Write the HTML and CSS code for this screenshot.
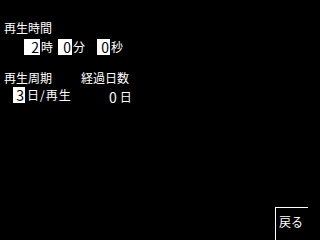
FILE: index.html
```html
<!DOCTYPE html>
<html lang="ja">
<head>
<meta charset="utf-8">
<link rel="stylesheet" href="styles.css">
</head>
<body>
<div class="screen">
  <section class="playtime">
    <div class="label">再生時間</div>
    <div class="time-row">
      <span class="field f-hour">2</span><span class="unit">時</span>
      <span class="field f-min">0</span><span class="unit">分</span>
      <span class="field f-sec">0</span><span class="unit">秒</span>
    </div>
  </section>
  <section class="cycle">
    <div class="col col-left">
      <div class="label">再生周期</div>
      <div class="cycle-row">
        <span class="field f-cycle">3</span><span class="unit unit-cycle">日/再生</span>
      </div>
    </div>
    <div class="col col-right">
      <div class="label">経過日数</div>
      <div class="elapsed-row">
        <span class="num">0</span><span class="unit">日</span>
      </div>
    </div>
  </section>
  <footer class="footer">
    <div class="back">戻る</div>
  </footer>
</div>
</body>
</html>
```
FILE: styles.css
```css
* { box-sizing: border-box; }
html, body {
  margin: 0;
  padding: 0;
  background: #000;
}
body {
  width: 320px;
  height: 240px;
  overflow: hidden;
  color: #fff;
  font-family: "Noto Sans CJK JP", "Noto Sans", sans-serif;
  font-size: 12px;
  line-height: 16px;
}
.screen {
  width: 320px;
  height: 240px;
  display: flex;
  flex-direction: column;
}
.label {
  height: 16px;
  white-space: nowrap;
}
.playtime {
  padding: 20px 0 0 4px;
}
.time-row {
  display: flex;
  margin-top: 3px;
  padding-left: 20px;
  height: 16px;
}
.field {
  display: block;
  height: 16px;
  background: #fff;
  color: #000;
  text-align: right;
  padding-right: 1px;
  font-size: 14px;
}
.num {
  display: block;
  font-size: 14px;
}
.unit {
  display: block;
  white-space: nowrap;
}
.f-hour { width: 16px; }
.f-min { width: 14px; margin-left: 5px; }
.f-sec { width: 13px; margin-left: 12px; }
.time-row .unit { margin-left: 1px; }

.cycle {
  display: flex;
  padding: 15px 0 0 4px;
}
.col-left { width: 77px; }
.col-right { width: 60px; }
.cycle-row {
  display: flex;
  margin-top: 1px;
  padding-left: 9px;
  height: 16px;
}
.f-cycle { width: 12px; }
.unit-cycle { margin-left: 2px; letter-spacing: 1px; }
.elapsed-row {
  display: flex;
  margin-top: 3px;
  padding-left: 28px;
}
.elapsed-row .unit { margin-left: 3px; }

.footer {
  margin-top: auto;
  display: flex;
  justify-content: flex-end;
  padding-right: 12px;
}
.back {
  width: 33px;
  height: 33px;
  border-left: 1px solid #fff;
  border-top: 1px solid #fff;
  padding: 6px 0 0 3px;
  white-space: nowrap;
}
```
